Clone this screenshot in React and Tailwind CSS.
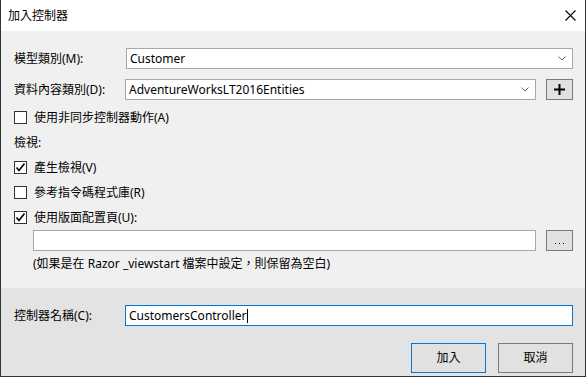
import React from 'react'

const font = { fontFamily: '"Segoe UI", "Noto Sans", "Noto Sans CJK TC", sans-serif' }

function Chevron() {
  return (
    <svg width="8" height="5" viewBox="0 0 8 5" className="shrink-0">
      <path d="M0.5 0.5 L4 4 L7.5 0.5" fill="none" stroke="#6b6b6b" strokeWidth="1" />
    </svg>
  )
}

function Select({ value }) {
  return (
    <div className="flex-1 h-full bg-white border border-[#a8a8a8] flex items-center justify-between pl-[3px] pr-[6px]">
      <span className="text-[12px] text-black leading-none">{value}</span>
      <Chevron />
    </div>
  )
}

function Checkbox({ checked, label }) {
  return (
    <div className="h-[25px] flex items-center gap-[7px]">
      <div className="w-[13px] h-[13px] bg-white border border-[#333] flex items-center justify-center">
        {checked && (
          <svg width="11" height="11" viewBox="0 0 11 11">
            <path d="M1.5 5.5 L4 8.5 L9.5 1.5" fill="none" stroke="#000" strokeWidth="1.6" />
          </svg>
        )}
      </div>
      <span className="text-[12px] text-black leading-none">{label}</span>
    </div>
  )
}

export default function App() {
  return (
    <div style={font} className="w-[586px] h-[377px] flex flex-col bg-white border-x border-b border-[#333]">
      {/* title bar */}
      <div className="h-[31px] shrink-0 flex items-center justify-between pl-[7px] pr-[9px] bg-white">
        <span className="text-[12px] text-black">加入控制器</span>
        <svg width="11" height="11" viewBox="0 0 11 11">
          <path d="M0.5 0.5 L10.5 10.5 M10.5 0.5 L0.5 10.5" stroke="#000" strokeWidth="1.1" />
        </svg>
      </div>

      {/* body */}
      <div className="h-[257px] shrink-0 bg-[#f0f0f0] pl-[13px] pr-[12px] pt-[17px] flex flex-col">
        <div className="h-[21px] flex items-center">
          <span className="w-[112px] shrink-0 text-[12px] text-black">模型類別(M):</span>
          <Select value="Customer" />
        </div>
        <div className="h-[21px] mt-[10px] flex items-center gap-[10px]">
          <div className="flex-1 h-full flex items-center">
            <span className="w-[111px] shrink-0 text-[12px] text-black">資料內容類別(D):</span>
            <Select value="AdventureWorksLT2016Entities" />
          </div>
          <div className="w-[27px] h-full bg-[#e1e1e1] border border-[#7a7a7a] flex items-center justify-center">
            <svg width="11" height="11" viewBox="0 0 11 11">
              <path d="M5.5 0 V11 M0 5.5 H11" stroke="#000" strokeWidth="2" />
            </svg>
          </div>
        </div>

        <div className="mt-[5px]">
          <Checkbox label="使用非同步控制器動作(A)" />
          <div className="h-[25px] flex items-center">
            <span className="text-[12px] text-black leading-none">檢視:</span>
          </div>
          <Checkbox checked label="產生檢視(V)" />
          <Checkbox label="參考指令碼程式庫(R)" />
          <Checkbox checked label="使用版面配置頁(U):" />
        </div>

        <div className="ml-[19px] h-[21px] flex items-center gap-[10px]">
          <div className="flex-1 h-full bg-white border border-[#a8a8a8]" />
          <div className="w-[27px] h-full bg-[#e1e1e1] border border-[#7a7a7a] flex items-end justify-center gap-[3px] pb-[6px]">
            <span className="w-[1px] h-[1px] bg-black" />
            <span className="w-[1px] h-[1px] bg-black" />
            <span className="w-[1px] h-[1px] bg-black" />
          </div>
        </div>
        <div className="ml-[19px] mt-[5px] h-[16px] flex items-center">
          <span className="text-[12px] text-black leading-none">(如果是在 Razor _viewstart 檔案中設定，則保留為空白)</span>
        </div>
      </div>

      {/* footer */}
      <div className="flex-1 bg-[#e3e3e3] pl-[13px] pr-[12px] pt-[17px] flex flex-col">
        <div className="h-[21px] flex items-center">
          <span className="w-[111px] shrink-0 text-[12px] text-black">控制器名稱(C):</span>
          <div className="flex-1 h-full bg-white border border-[#0078d7] flex items-center pl-[3px]">
            <span className="text-[12px] text-black leading-none">CustomersController</span>
            <span className="w-[1px] h-[14px] bg-black" />
          </div>
        </div>
        <div className="mt-[17px] flex justify-end gap-[12px]">
          <div className="w-[75px] h-[30px] bg-[#e1e1e1] border border-[#0078d7] flex items-center justify-center text-[12px] text-black">加入</div>
          <div className="w-[75px] h-[30px] bg-[#e1e1e1] border border-[#7a7a7a] flex items-center justify-center text-[12px] text-black">取消</div>
        </div>
      </div>
    </div>
  )
}
